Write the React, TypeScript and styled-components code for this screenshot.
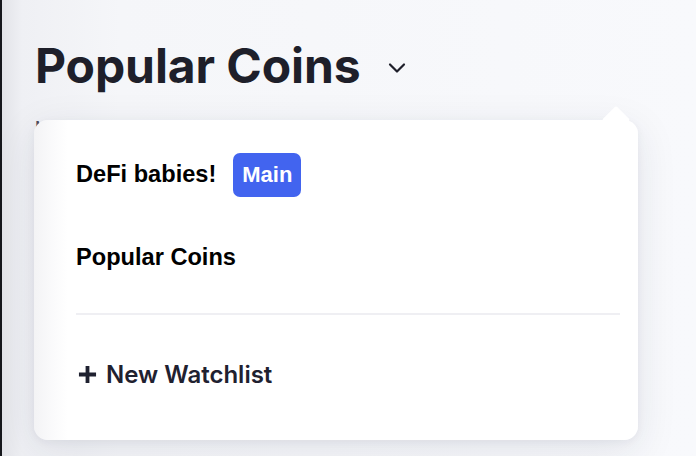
import React from "react";
import styled, { createGlobalStyle } from "styled-components";

const Global = createGlobalStyle`
  html, body { margin: 0; padding: 0; }
  body {
    width: 696px;
    height: 456px;
    overflow: hidden;
    background: linear-gradient(to right, #16171c 0, #16171c 2px, #e2e3e8 2px, #eff0f4 22px, #f5f6f9 120px, #f8f9fc 100%);
    font-family: Inter, "Noto Sans", sans-serif;
  }
`;

const Page = styled.div`
  position: relative;
  height: 456px;
  padding: 37px 0 0 35px;
  box-sizing: border-box;
`;

const TitleRow = styled.div`
  display: flex;
  align-items: center;
  gap: 27px;
`;

const Title = styled.h1`
  margin: 0;
  font-family: Inter, sans-serif;
  font-weight: 700;
  font-size: 48px;
  line-height: 58px;
  letter-spacing: -0.1px;
  color: #1e1f2a;
`;

const Chevron = styled.svg`
  width: 18px;
  height: 18px;
  margin-top: 4px;
  color: #1e1f2a;
`;

const Subtitle = styled.p`
  margin: 20px 0 0 0;
  font-family: Inter, sans-serif;
  font-size: 16px;
  line-height: 24px;
  color: #4a4e5e;
`;

const Popover = styled.div`
  position: absolute;
  left: 34px;
  top: 120px;
  width: 604px;
  height: 320px;
  box-sizing: border-box;
  border-radius: 14px;
  background: linear-gradient(to right, #f3f3f5 0, #fafafb 18px, #ffffff 34px);
  box-shadow: 0 10px 40px rgba(30, 40, 70, 0.10), 0 2px 8px rgba(30, 40, 70, 0.05);
  padding: 13px 18px 0 42px;
  display: flex;
  flex-direction: column;

  &::before {
    content: "";
    position: absolute;
    width: 20px;
    height: 20px;
    background: #fff;
    right: 12px;
    top: -10px;
    transform: rotate(45deg);
    border-radius: 2px;
  }
`;

const Item = styled.div`
  display: flex;
  align-items: center;
  gap: 17px;
  height: 83px;
  font-family: "Liberation Sans", Arial, sans-serif;
  font-weight: 700;
  font-size: 23.6px;
  color: #000;
`;

const Badge = styled.span`
  display: inline-flex;
  align-items: center;
  justify-content: center;
  height: 44px;
  margin-top: 1px;
  padding: 0 9px;
  border-radius: 7px;
  background: #4264ef;
  color: #fff;
  font-family: "Liberation Sans", Arial, sans-serif;
  font-weight: 700;
  font-size: 22px;
`;

const Divider = styled.hr`
  margin: 14px 0 0 0;
  border: none;
  height: 2px;
  background: #efeff3;
`;

const NewButton = styled.div`
  display: flex;
  align-items: center;
  gap: 9px;
  height: 120px;
  padding-bottom: 2px;
  box-sizing: border-box;
  font-family: Inter, sans-serif;
  font-weight: 600;
  font-size: 24px;
  color: #1f2130;
`;

const Plus = styled.svg`
  width: 19px;
  height: 19px;
  margin-left: 2px;
`;

export default function App() {
  return (
    <>
      <Global />
      <Page>
        <TitleRow>
          <Title>Popular Coins</Title>
          <Chevron viewBox="0 0 18 18" fill="none" stroke="currentColor" strokeWidth="2.2" strokeLinecap="round" strokeLinejoin="round">
            <path d="M2 5.5 L9 12.5 L16 5.5" />
          </Chevron>
        </TitleRow>
        <Subtitle>Make lists of your favourite coins to track their latest prices and stats</Subtitle>
        <Popover>
          <Item>
            DeFi babies!
            <Badge>Main</Badge>
          </Item>
          <Item>Popular Coins</Item>
          <Divider />
          <NewButton>
            <Plus viewBox="0 0 20 20" fill="none" stroke="currentColor" strokeWidth="4">
              <path d="M10 1 V19 M1 10 H19" />
            </Plus>
            New Watchlist
          </NewButton>
        </Popover>
      </Page>
    </>
  );
}
